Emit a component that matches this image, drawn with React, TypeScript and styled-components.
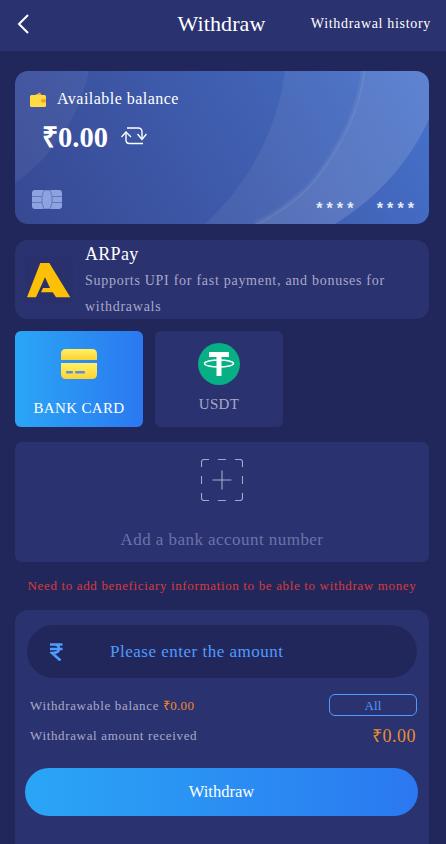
import React from "react";
import styled, { createGlobalStyle } from "styled-components";

const Global = createGlobalStyle`
  html, body { margin: 0; padding: 0; background: #22275b; }
  * { box-sizing: border-box; }
  body { font-family: "Liberation Serif", "Times New Roman", serif; }
`;

const Page = styled.div`
  width: 446px;
  height: 844px;
  overflow: hidden;
  background: #22275b;
  display: flex;
  flex-direction: column;
`;

const Header = styled.header`
  height: 51px;
  flex: none;
  background: #2b3270;
  display: grid;
  grid-template-columns: 1fr auto 1fr;
  align-items: center;
  padding: 0 15px 4px 12px;
  color: #fff;
`;
const Back = styled.svg`
  width: 14px;
  height: 22px;
  display: block;
  margin-left: 4px;
`;
const Title = styled.h1`
  margin: 0;
  font-size: 22px;
  font-weight: 400;
  line-height: 24px;
  letter-spacing: 0.1px;
  color: #fff;
`;
const HistoryLink = styled.span`
  justify-self: end;
  font-size: 14px;
  letter-spacing: 0.68px;
  white-space: nowrap;
`;

const Content = styled.main`
  flex: 1;
  padding: 20px 17px 0 15px;
  display: flex;
  flex-direction: column;
`;

const BalanceCard = styled.section`
  position: relative;
  height: 153px;
  border-radius: 13px;
  overflow: hidden;
  background: linear-gradient(62deg, #374892 0%, #4060b2 60%, #4672cc 100%);
  padding: 18px 15px 0;
  color: #fff;
  display: flex;
  flex-direction: column;
`;
const CardArt = styled.svg`
  position: absolute;
  inset: 0;
  width: 100%;
  height: 100%;
`;
const BalanceLabel = styled.div`
  position: relative;
  display: flex;
  align-items: center;
  gap: 11px;
  font-size: 16px;
  letter-spacing: 0.47px;
  line-height: 20px;
`;
const BalanceRow = styled.div`
  position: relative;
  display: flex;
  align-items: center;
  gap: 13px;
  margin: 9px 0 0 12px;
  height: 36px;
`;
const Amount = styled.strong`
  font-size: 28.5px;
  font-weight: 700;
`;
const CardFoot = styled.div`
  position: relative;
  margin-top: 36px;
  display: flex;
  justify-content: space-between;
  align-items: flex-end;
  padding: 0 0 0 2px;
`;
const Stars = styled.div`
  display: flex;
  gap: 19.3px;
  margin: 0 -4.1px -8px 0;
  font-size: 16px;
  font-family: "Liberation Sans", sans-serif;
  font-weight: 700;
  letter-spacing: 4.1px;
  line-height: 16px;
  color: #e4eaf8;
`;

const PayCard = styled.section`
  margin-top: 16px;
  height: 79px;
  border-radius: 13px;
  background: #2b3270;
  display: flex;
  padding-left: 10px;
  gap: 12px;
  color: #fff;
`;
const LogoBox = styled.div`
  width: 48px;
  height: 46px;
  margin-top: 17px;
  flex: none;
  background: #2a306b;
  display: flex;
  align-items: center;
  justify-content: center;
`;
const PayText = styled.div`
  min-width: 0;
`;
const PayName = styled.div`
  font-size: 18px;
  line-height: 28px;
  letter-spacing: 0.3px;
`;
const PayDesc = styled.div`
  font-size: 14px;
  line-height: 26px;
  letter-spacing: 0.72px;
  color: #a8a9c9;
`;

const Tabs = styled.div`
  display: flex;
  gap: 12px;
  margin-top: 12px;
`;
const Tab = styled.div<{ $active?: boolean }>`
  width: 128px;
  height: 96px;
  border-radius: 6px;
  background: ${(p) => (p.$active ? "linear-gradient(90deg, #2aa6f6, #2b78f0)" : "#2b3270")};
  color: ${(p) => (p.$active ? "#fff" : "#a8a9c9")};
  display: flex;
  flex-direction: column;
  align-items: center;
  font-size: 15px;
  letter-spacing: 0.35px;
  white-space: nowrap;
`;
const TabIcon = styled.svg<{ $top: number }>`
  margin-top: ${(p) => p.$top}px;
  display: block;
`;
const TabLabel = styled.span<{ $gap: number }>`
  margin-top: ${(p) => p.$gap}px;
  line-height: 18px;
`;

const AddBox = styled.section`
  margin-top: 15px;
  height: 120px;
  border-radius: 7px;
  background: #2b3270;
  display: flex;
  flex-direction: column;
  align-items: center;
  padding-top: 17px;
`;
const AddText = styled.div`
  margin-top: 27px;
  font-size: 17px;
  line-height: 24px;
  letter-spacing: 0.45px;
  color: #6c72a8;
`;
const Warning = styled.p`
  margin: 15px 0 0;
  text-align: center;
  font-size: 13px;
  line-height: 18px;
  letter-spacing: 0.65px;
  color: #d83a3e;
  white-space: nowrap;
`;

const Panel = styled.section`
  margin-top: 15px;
  flex: 1;
  border-radius: 13px 13px 0 0;
  background: #2b3270;
  padding: 15px 12px 0;
  display: flex;
  flex-direction: column;
`;
const AmountInput = styled.div`
  height: 53px;
  border-radius: 27px;
  background: #22275b;
  display: flex;
  align-items: center;
  padding-left: 23px;
  color: #4f9bff;
`;
const AmountPlaceholder = styled.span`
  margin-left: 47px;
  font-size: 17px;
  letter-spacing: 0.5px;
`;
const InfoRow = styled.div<{ $mt: number }>`
  margin-top: ${(p) => p.$mt}px;
  padding: 0 0 0 3px;
  display: flex;
  justify-content: space-between;
  align-items: center;
  font-size: 13px;
  letter-spacing: 0.65px;
  color: #a8a9c9;
`;
const Accent = styled.span`
  color: #e98d31;
  letter-spacing: 0.3px;
`;
const Received = styled.span`
  font-size: 18px;
  letter-spacing: 0.5px;
  margin-right: 1px;
  line-height: 22px;
  color: #e98d31;
`;
const AllButton = styled.div`
  width: 88px;
  height: 22px;
  border: 1px solid #4f9bff;
  border-radius: 6px;
  color: #4f9bff;
  font-size: 13px;
  letter-spacing: 0.2px;
  line-height: 21px;
  text-align: center;
`;
const WithdrawButton = styled.div`
  margin: 21px -1px 0 -2px;
  height: 48px;
  border-radius: 24px;
  background: linear-gradient(90deg, #2aa6f6, #2b78f0);
  color: #fff;
  display: flex;
  align-items: center;
  justify-content: center;
  font-size: 16.5px;
`;

export default function App() {
  return (
    <Page>
      <Global />
      <Header>
        <Back viewBox="0 0 14 22" fill="none" stroke="#fff" strokeWidth="2">
          <path d="M12 2 L3 11 L12 20" />
        </Back>
        <Title>Withdraw</Title>
        <HistoryLink>Withdrawal history</HistoryLink>
      </Header>
      <Content>
        <BalanceCard>
          <CardArt viewBox="0 0 414 153" preserveAspectRatio="none">
            <path d="M74 0 C66 40 40 85 0 112 L0 0 Z" fill="#fff" fillOpacity=".05" />
            <path d="M270 0 C262 60 235 110 190 153 L320 153 C365 125 395 90 414 48 L414 0 Z" fill="#fff" fillOpacity=".06" />
            <path d="M348 0 C345 33 328 73 298 110 C285 125 265 140 240 153 L320 153 C365 125 395 90 414 48 L414 0 Z" fill="#fff" fillOpacity=".08" />
            <path d="M348 0 C345 33 328 73 298 110 C285 125 265 140 240 153" fill="none" stroke="#fff" strokeOpacity=".05" strokeWidth="5" />
          </CardArt>
          <BalanceLabel>
            <svg width="16" height="15" viewBox="0 0 16 15">
              <path d="M3 4 L10 .5 L12 4 Z" fill="#f6b23a" />
              <rect x="0" y="3" width="16" height="12" rx="1.5" fill="#ffdc45" />
              <rect x="11" y="7" width="5" height="3.5" rx="1" fill="#f5a623" />
            </svg>
            Available balance
          </BalanceLabel>
          <BalanceRow>
            <Amount>₹0.00</Amount>
            <svg width="26" height="18" viewBox="0 0 26 18" fill="none" stroke="#fff" strokeWidth="1.4">
              <path d="M.5 10 L5 5 L10 10" />
              <path d="M5 5.5 V13 Q5 16.5 8.5 16.5 H22" />
              <path d="M25.5 7 L21 12.5 L16.5 7" />
              <path d="M21 12 V5 Q21 1 17 1 H6" />
            </svg>
          </BalanceRow>
          <CardFoot>
            <svg width="30" height="19" viewBox="0 0 30 19">
              <rect width="30" height="19" rx="3" fill="#8da3e0" />
              <path d="M0 6.5 H10 M0 12.5 H10 M20 6.5 H30 M20 12.5 H30 M12 0 L10 6 V13 L12 19 M18 0 L20 6 V13 L18 19 M12 0 H18 M12 19 H18" stroke="#5f78c0" strokeWidth="1" fill="none" />
            </svg>
            <Stars>
              <span>****</span>
              <span>****</span>
            </Stars>
          </CardFoot>
        </BalanceCard>

        <PayCard>
          <LogoBox>
            <svg width="44" height="35" viewBox="0 0 44 35">
              <path d="M0 34.3 L13.3 0 H22.3 L43.3 34.3 H29 L25.7 29.3 H14 L16 25 H23 L18 14.3 L9 34.3 Z" fill="#fdc006" />
            </svg>
          </LogoBox>
          <PayText>
            <PayName>ARPay</PayName>
            <PayDesc>Supports UPI for fast payment, and bonuses for withdrawals</PayDesc>
          </PayText>
        </PayCard>

        <Tabs>
          <Tab $active>
            <TabIcon $top={18} width="36" height="30" viewBox="0 0 36 30">
              <defs>
                <linearGradient id="cardGrad" x1="0" y1="0" x2="0" y2="1">
                  <stop offset="0" stopColor="#fff162" />
                  <stop offset="1" stopColor="#fed234" />
                </linearGradient>
              </defs>
              <path d="M0 11 V5 Q0 0 5 0 H31 Q36 0 36 5 V11 Z" fill="url(#cardGrad)" />
              <path d="M0 14 H36 V25 Q36 30 31 30 H5 Q0 30 0 25 Z" fill="url(#cardGrad)" />
              <rect x="5" y="22" width="7" height="2.5" rx="1" fill="#5d8fd8" />
              <rect x="14" y="22" width="10" height="2.5" rx="1" fill="#5d8fd8" />
            </TabIcon>
            <TabLabel $gap={20}>BANK CARD</TabLabel>
          </Tab>
          <Tab>
            <TabIcon $top={12} width="42" height="42" viewBox="0 0 42 42">
              <circle cx="21" cy="21" r="21" fill="#06b084" />
              <path d="M11 9 H31 V14 H23.5 V33 H18.5 V14 H11 Z" fill="#fff" />
              <ellipse cx="21" cy="20.5" rx="14.5" ry="3.5" fill="none" stroke="#fff" strokeWidth="1.4" />
            </TabIcon>
            <TabLabel $gap={10}>USDT</TabLabel>
          </Tab>
        </Tabs>

        <AddBox>
          <svg width="42" height="42" viewBox="0 0 42 42" fill="none" stroke="#a8a9c9" strokeWidth="1.1">
            <path d="M.5 8 V3 Q.5 .5 3 .5 H8 M17 .5 H25 M34 .5 H39 Q41.5 .5 41.5 3 V8 M41.5 17 V25 M41.5 34 V39 Q41.5 41.5 39 41.5 H34 M25 41.5 H17 M8 41.5 H3 Q.5 41.5 .5 39 V34 M.5 25 V17" />
            <path d="M11.5 21 H30.5 M21 11.5 V30.5" />
          </svg>
          <AddText>Add a bank account number</AddText>
        </AddBox>

        <Warning>Need to add beneficiary information to be able to withdraw money</Warning>

        <Panel>
          <AmountInput>
            <svg width="13" height="18" viewBox="0 0 13 18" fill="none" stroke="#4f9bff" strokeWidth="2.6">
              <path d="M0 1.5 H12.5 M0 6 H12.5 M2 1.5 H4.5 Q9 1.5 9 6 Q9 10 2 10 L10.5 17.5" />
            </svg>
            <AmountPlaceholder>Please enter the amount</AmountPlaceholder>
          </AmountInput>
          <InfoRow $mt={16}>
            <span>
              Withdrawable balance <Accent>₹0.00</Accent>
            </span>
            <AllButton>All</AllButton>
          </InfoRow>
          <InfoRow $mt={9}>
            <span>Withdrawal amount received</span>
            <Received>₹0.00</Received>
          </InfoRow>
          <WithdrawButton>Withdraw</WithdrawButton>
        </Panel>
      </Content>
    </Page>
  );
}
